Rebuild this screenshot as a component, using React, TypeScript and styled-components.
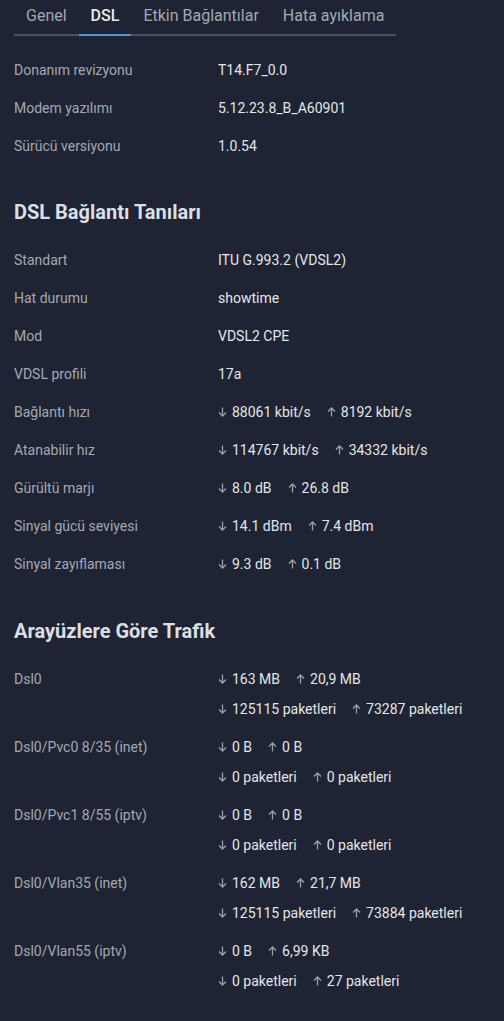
import React from "react";
import styled, { createGlobalStyle } from "styled-components";

const GlobalStyle = createGlobalStyle`
  html, body {
    margin: 0;
    padding: 0;
    background: #1e2433;
  }
  body {
    font-family: Roboto, "Noto Sans", "Liberation Sans", sans-serif;
    -webkit-font-smoothing: antialiased;
  }
`;

const Page = styled.div`
  min-height: 1021px;
  padding: 0 14px 20px;
  box-sizing: border-box;
  background: #1e2433;
`;

const TabBar = styled.div`
  display: inline-flex;
  border-bottom: 2px solid #4a505c;
`;

const Tab = styled.div<{ $active?: boolean }>`
  padding: 0 12px;
  height: 34px;
  line-height: 32px;
  font-size: 16px;
  color: ${(p) => (p.$active ? "#e9ebee" : "#a3a9b2")};
  font-weight: ${(p) => (p.$active ? 500 : 400)};
  margin-bottom: -2px;
  border-bottom: 2px solid ${(p) => (p.$active ? "#4f98d8" : "transparent")};
`;

const Section = styled.div<{ $top: number }>`
  margin-top: ${(p) => p.$top}px;
`;

const Heading = styled.h2<{ $gap: number }>`
  margin: 0 0 ${(p) => p.$gap}px;
  font-size: 20px;
  line-height: 24px;
  font-weight: 700;
  color: #dcdfe3;
`;

const Row = styled.div`
  display: grid;
  grid-template-columns: 204px 1fr;
  padding: 4px 0;
  font-size: 14px;
  line-height: 30px;
`;

const Label = styled.div`
  color: #a4a9b1;
`;

const Values = styled.div`
  display: flex;
  flex-direction: column;
  color: #e4e6e9;
`;

const Pair = styled.div`
  display: flex;
  align-items: center;
  gap: 16px;
`;

const Flow = styled.span`
  display: inline-flex;
  align-items: center;
  gap: 5px;
`;

const Arrow = ({ up }: { up?: boolean }) => (
  <svg
    width="9"
    height="10"
    viewBox="0 0 9 10"
    style={{ transform: up ? "rotate(180deg)" : undefined }}
  >
    <path
      d="M4.5 0.5V9M1 5.5L4.5 9L8 5.5"
      fill="none"
      stroke="#9aa0a8"
      strokeWidth="1.3"
    />
  </svg>
);

const Both = ({ down, up }: { down: string; up: string }) => (
  <Pair>
    <Flow>
      <Arrow />
      {down}
    </Flow>
    <Flow>
      <Arrow up />
      {up}
    </Flow>
  </Pair>
);

const info = [
  ["Donanım revizyonu", "T14.F7_0.0"],
  ["Modem yazılımı", "5.12.23.8_B_A60901"],
  ["Sürücü versiyonu", "1.0.54"],
];

const diag: [string, string | [string, string]][] = [
  ["Standart", "ITU G.993.2 (VDSL2)"],
  ["Hat durumu", "showtime"],
  ["Mod", "VDSL2 CPE"],
  ["VDSL profili", "17a"],
  ["Bağlantı hızı", ["88061 kbit/s", "8192 kbit/s"]],
  ["Atanabilir hız", ["114767 kbit/s", "34332 kbit/s"]],
  ["Gürültü marjı", ["8.0 dB", "26.8 dB"]],
  ["Sinyal gücü seviyesi", ["14.1 dBm", "7.4 dBm"]],
  ["Sinyal zayıflaması", ["9.3 dB", "0.1 dB"]],
];

const traffic = [
  ["Dsl0", "163 MB", "20,9 MB", "125115", "73287"],
  ["Dsl0/Pvc0 8/35 (inet)", "0 B", "0 B", "0", "0"],
  ["Dsl0/Pvc1 8/55 (iptv)", "0 B", "0 B", "0", "0"],
  ["Dsl0/Vlan35 (inet)", "162 MB", "21,7 MB", "125115", "73884"],
  ["Dsl0/Vlan55 (iptv)", "0 B", "6,99 KB", "0", "27"],
];

export default function App() {
  return (
    <>
      <GlobalStyle />
      <Page>
        <TabBar>
          <Tab>Genel</Tab>
          <Tab $active>DSL</Tab>
          <Tab>Etkin Bağlantılar</Tab>
          <Tab>Hata ayıklama</Tab>
        </TabBar>

        <Section $top={15}>
          {info.map(([l, v]) => (
            <Row key={l}>
              <Label>{l}</Label>
              <Values>{v}</Values>
            </Row>
          ))}
        </Section>

        <Section $top={35}>
          <Heading $gap={17}>DSL Bağlantı Tanıları</Heading>
          {diag.map(([l, v]) => (
            <Row key={l}>
              <Label>{l}</Label>
              <Values>
                {typeof v === "string" ? v : <Both down={v[0]} up={v[1]} />}
              </Values>
            </Row>
          ))}
        </Section>

        <Section $top={36}>
          <Heading $gap={17}>Arayüzlere Göre Trafik</Heading>
          {traffic.map(([l, d, u, pd, pu]) => (
            <Row key={l}>
              <Label>{l}</Label>
              <Values>
                <Both down={d} up={u} />
                <Both down={`${pd} paketleri`} up={`${pu} paketleri`} />
              </Values>
            </Row>
          ))}
        </Section>
      </Page>
    </>
  );
}
